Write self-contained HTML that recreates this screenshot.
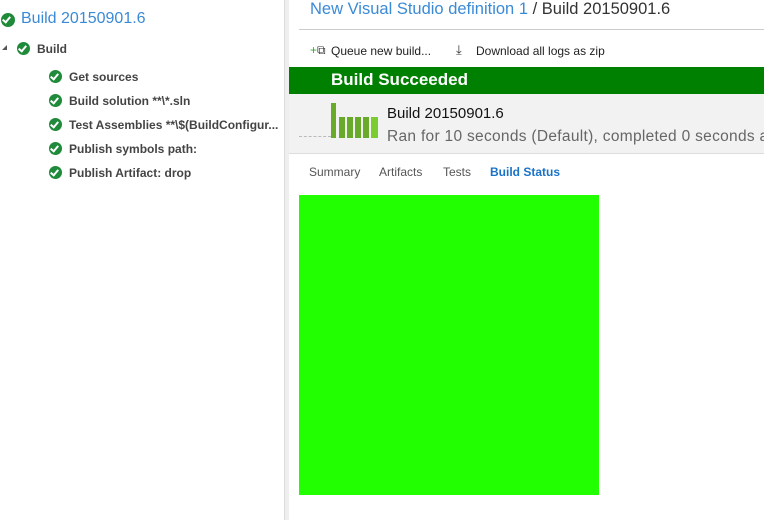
<!DOCTYPE html><html><head><style>
body{margin:0;width:764px;height:520px;background:#fff;font-family:"Liberation Sans",sans-serif;position:relative;overflow:hidden}
.a{position:absolute;white-space:nowrap}
.chk{position:absolute;width:13px;height:13px;border-radius:50%;background:#1e8a3a}
.chk:after{content:"";position:absolute;left:3px;top:2px;width:3px;height:6px;border:solid #fff;border-width:0 2px 2px 0;transform:rotate(40deg)}
.it{font-size:12px;font-weight:bold;color:#444}
</style></head><body>
<div class="a" style="left:284px;top:0;width:4px;height:520px;background:#eee;border-left:1px solid #ddd"></div>
<div class="chk" style="left:1px;top:13px;width:14px;height:14px"></div>
<div class="a" style="left:21px;top:10px;font-size:16px;color:#3a8ad6">Build 20150901.6</div>
<div class="a" style="left:2px;top:45px;width:0;height:0;border-left:5px solid transparent;border-bottom:5px solid #555"></div>
<div class="chk" style="left:17px;top:42px"></div>
<div class="a it" style="left:37px;top:42px">Build</div>
<div class="chk" style="left:49px;top:70px"></div><div class="a it" style="left:69px;top:70px">Get sources</div>
<div class="chk" style="left:49px;top:94px"></div><div class="a it" style="left:69px;top:94px">Build solution **\*.sln</div>
<div class="chk" style="left:49px;top:118px"></div><div class="a it" style="left:69px;top:118px">Test Assemblies **\$(BuildConfigur...</div>
<div class="chk" style="left:49px;top:142px"></div><div class="a it" style="left:69px;top:142px">Publish symbols path:</div>
<div class="chk" style="left:49px;top:166px"></div><div class="a it" style="left:69px;top:166px">Publish Artifact: drop</div>

<div class="a" style="left:310px;top:0px;font-size:16.5px;color:#3a8ad6">New Visual Studio definition 1 <span style="color:#333">/ Build 20150901.6</span></div>
<div class="a" style="left:299px;top:29px;width:465px;height:1px;background:#ccc"></div>
<div class="a" style="left:310px;top:43px;font-size:12px;color:#333"><span style="color:#3a3">+</span>⧉</div>
<div class="a" style="left:331px;top:44px;font-size:12px;color:#222">Queue new build...</div>
<div class="a" style="left:456px;top:42px;font-size:13px;color:#333">⤓</div>
<div class="a" style="left:476px;top:44px;font-size:12px;color:#222">Download all logs as zip</div>
<div class="a" style="left:289px;top:67px;width:475px;height:27px;background:#008000"></div>
<div class="a" style="left:331px;top:70px;font-size:17px;font-weight:bold;color:#fff">Build Succeeded</div>
<div class="a" style="left:289px;top:94px;width:475px;height:59px;background:#f2f2f2;border-bottom:1px solid #ddd"></div>
<div class="a" style="left:299px;top:136px;width:32px;border-top:1px dashed #bbb"></div>
<div class="a" style="left:331px;top:103px;width:5px;height:35px;background:#6aaa2a"></div>
<div class="a" style="left:339px;top:117px;width:6px;height:21px;background:#6aaa2a"></div>
<div class="a" style="left:347px;top:117px;width:6px;height:21px;background:#6aaa2a"></div>
<div class="a" style="left:355px;top:117px;width:6px;height:21px;background:#6aaa2a"></div>
<div class="a" style="left:363px;top:117px;width:6px;height:21px;background:#6aaa2a"></div>
<div class="a" style="left:371px;top:117px;width:7px;height:21px;background:#7acc30"></div>
<div class="a" style="left:387px;top:105px;font-size:15px;color:#111">Build 20150901.6</div>
<div class="a" style="left:387px;top:128px;font-size:15.5px;letter-spacing:0.3px;color:#666">Ran for 10 seconds (Default), completed 0 seconds ago</div>
<div class="a" style="left:309px;top:165px;font-size:12px;color:#555">Summary</div>
<div class="a" style="left:379px;top:165px;font-size:12px;color:#555">Artifacts</div>
<div class="a" style="left:443px;top:165px;font-size:12px;color:#555">Tests</div>
<div class="a" style="left:490px;top:165px;font-size:12px;font-weight:bold;color:#1a73c8">Build Status</div>
<div class="a" style="left:299px;top:195px;width:300px;height:300px;background:#22ff00"></div>
</body></html>
